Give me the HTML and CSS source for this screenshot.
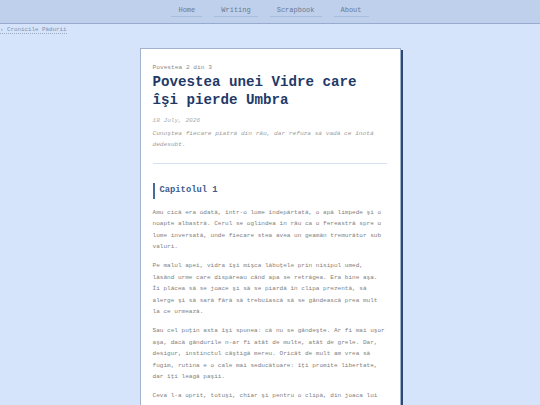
FILE: index.html
```html
<!DOCTYPE html>
<html lang="ro">
<head>
<meta charset="utf-8">
<title>Povestea unei Vidre care îşi pierde Umbra</title>
<link rel="stylesheet" href="styles.css">
</head>
<body>
<header class="site-header">
  <nav class="nav">
    <a class="nav-link" href="#">Home</a>
    <a class="nav-link" href="#">Writing</a>
    <a class="nav-link" href="#">Scrapbook</a>
    <a class="nav-link" href="#">About</a>
  </nav>
</header>
<div class="breadcrumb"><a class="crumb" href="#">› Cronicile Pădurii</a></div>
<main class="card">
  <div class="series">Povestea 2 din 3</div>
  <h1 class="title">Povestea unei Vidre care îşi pierde Umbra</h1>
  <div class="date">18 July, 2026</div>
  <p class="subtitle">Cunoştea fiecare piatră din râu, dar refuza să vadă ce înotă dedesubt.</p>
  <hr class="divider">
  <h2 class="chapter">Capitolul 1</h2>
  <p class="para">Amu cică era odată, într-o lume îndepărtată, o apă limpede şi o noapte albastră. Cerul se oglindea în râu ca o fereastră spre o lume inversată, unde fiecare stea avea un geamăn tremurător sub valuri.</p>
  <p class="para">Pe malul apei, vidra îşi mişca lăbuţele prin nisipul umed, lăsând urme care dispăreau când apa se retrăgea. Era bine aşa. Îi plăcea să se joace şi să se piardă în clipa prezentă, să alerge şi să sară fără să trebuiască să se gândească prea mult la ce urmează.</p>
  <p class="para">Sau cel puţin asta îşi spunea: că nu se gândeşte. Ar fi mai uşor aşa, dacă gândurile n-ar fi atât de multe, atât de grele. Dar, desigur, instinctul câştigă mereu. Oricât de mult am vrea să fugim, rutina e o cale mai seducătoare: îţi promite libertate, dar îţi leagă paşii.</p>
  <p class="para">Ceva l-a oprit, totuşi, chiar şi pentru o clipă, din joaca lui fără sfârşit. O umbră care nu mai era a lui, plutind pe apă.</p>
</main>
</body>
</html>
```

FILE: styles.css
```css
html, body {
  margin: 0;
  padding: 0;
}
body {
  background: #d5e3fb;
  font-family: "Courier New", Courier, "Liberation Mono", monospace;
  min-height: 405px;
}
.site-header {
  background: #bed0ec;
  border-bottom: 1px solid #97abcf;
  height: 23px;
  display: flex;
  justify-content: center;
}
.nav {
  display: flex;
  gap: 12px;
  padding-top: 5px;
}
.nav-link {
  font-size: 7px;
  line-height: 10px;
  height: 10px;
  padding: 0 7px 1px;
  color: #6b7b92;
  text-decoration: none;
  border-bottom: 1px solid #a9bedd;
}
.breadcrumb {
  font-size: 5.85px;
  line-height: 9px;
  padding-top: 1px;
  height: 23px;
}
.crumb {
  color: #8291a8;
  text-decoration: none;
  border-bottom: 1px dotted #9aaac2;
}
.card {
  display: block;
  box-sizing: border-box;
  width: 261px;
  margin: 0 auto;
  background: #ffffff;
  border: 1px solid #a2b2cc;
  box-shadow: 2px 2px 0 #2a4878;
  padding: 14px 13px 20px 12px;
  min-height: 400px;
}
.series {
  font-size: 6.2px;
  line-height: 9px;
  color: #8a8a8a;
}
.title {
  margin: 2px 0 0;
  font-size: 14.17px;
  line-height: 17.7px;
  font-weight: bold;
  color: #1f3a68;
}
.date {
  margin-top: 7px;
  font-size: 6.1px;
  line-height: 9px;
  font-style: italic;
  color: #ababab;
}
.subtitle {
  margin: 3px 0 0;
  font-size: 6.15px;
  line-height: 11px;
  font-style: italic;
  color: #9c9c9c;
}
.divider {
  margin: 13px 0 0;
  border: 0;
  border-top: 1px solid #d3e1f3;
  height: 0;
}
.chapter {
  margin: 19px 0 0;
  font-size: 8.8px;
  line-height: 15.6px;
  font-weight: bold;
  color: #3b5d8e;
  border-left: 2px solid #4a6a9c;
  padding-left: 5px;
}
.para {
  margin: 7.5px 0 0;
  font-size: 6.05px;
  line-height: 11.5px;
  color: #7f7f7f;
}
```
